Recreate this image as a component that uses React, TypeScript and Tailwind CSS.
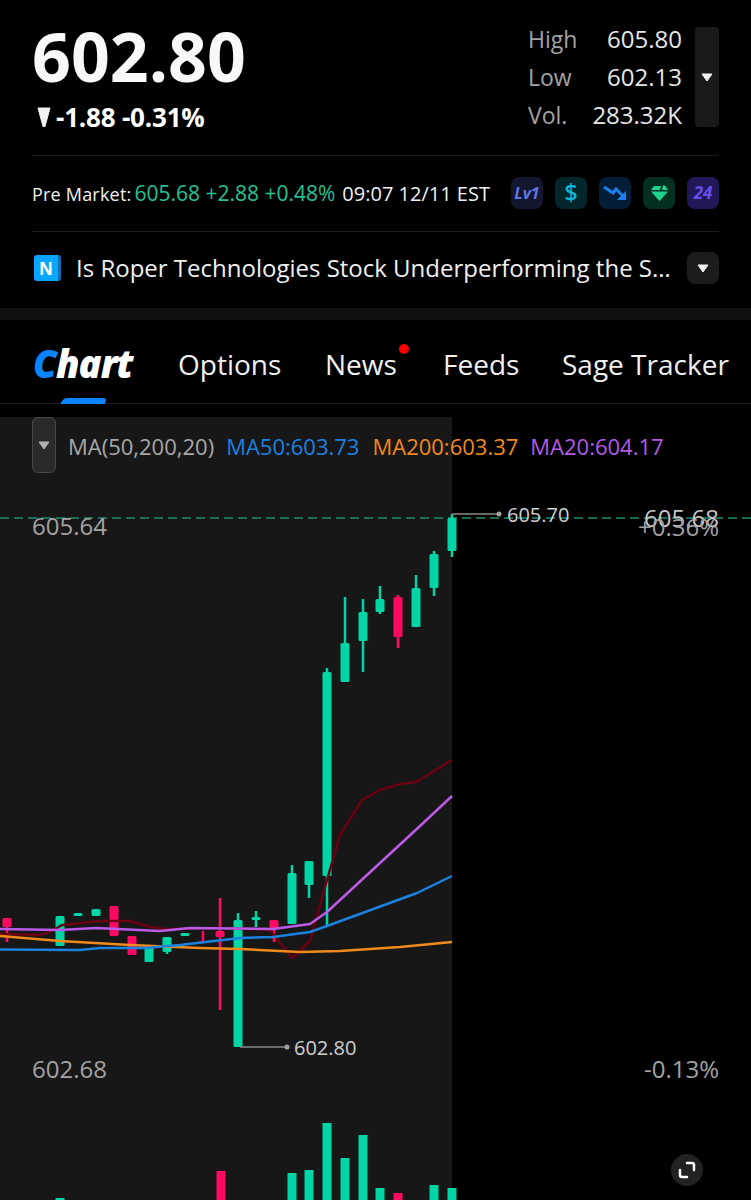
import React from "react";

const GREEN = "#00d6a5";
const RED = "#ff0a62";

// x, bodyTop, bodyBottom, wickTop, wickBottom, up (page coordinates)
const candles: [number, number, number, number, number, boolean][] = [
    [7, 918, 927, 918, 942, false],
    [60, 916, 946, 916, 946, true],
    [78, 913, 916, 913, 916, true],
    [96, 909, 916, 909, 916, true],
    [114, 906, 936, 906, 936, false],
    [132, 936, 955, 936, 955, false],
    [149, 947, 962, 947, 962, true],
    [167, 937, 952, 937, 954, true],
    [185, 933, 936, 933, 936, true],
    [203, 941, 943, 931, 943, false],
    [220, 931, 937, 898, 1010, false],
    [238, 920, 1047, 913, 1047, true],
    [256, 917, 920, 911, 927, true],
    [274, 920, 928, 920, 942, false],
    [292, 873, 924, 865, 924, true],
    [309, 861, 885, 861, 898, true],
    [327, 672, 876, 668, 925, true],
    [345, 643, 682, 597, 682, true],
    [363, 612, 641, 599, 672, true],
    [380, 599, 612, 586, 614, true],
    [398, 597, 637, 595, 648, false],
    [416, 588, 627, 575, 627, true],
    [434, 554, 588, 551, 596, true],
    [452, 518, 551, 514, 557, true],
];

// x, top
const volumes: [number, number, boolean][] = [
    [60, 1198, true],
    [221, 1171, false],
    [292, 1173, true],
    [309, 1170, true],
    [327, 1123, true],
    [345, 1158, true],
    [363, 1135, true],
    [380, 1188, true],
    [398, 1193, false],
    [434, 1185, true],
    [452, 1188, true],
];

const darkRedLine = "0,934 40,935 50,932 62,925 100,921 130,921 150,927 165,929 220,928 270,930 292,958 310,941 327,880 340,835 362,800 380,790 400,784 416,782 452,760";
const orangeLine = "0,936 60,941 130,945 200,948 240,949 300,952 340,951 400,947 452,942";
const blueLine = "0,949.5 80,950 100,948 145,948 180,945 240,938 273,937 310,932 327,926 417,893 452,876";
const purpleLine = "0,929 60,930 96,928 160,931 190,928 273,929 310,924 327,912 420,826 452,796";

function Caret({ className = "" }: { className?: string }) {
    return (
        <svg width="12" height="9" viewBox="0 0 12 9" className={className}>
            <path d="M1 1h10L6 8z" fill="currentColor" stroke="currentColor" strokeLinejoin="round" />
        </svg>
    );
}

function Badge({ bg, children }: { bg: string; children: React.ReactNode }) {
    return (
        <div className={`flex h-[32px] w-[32px] items-center justify-center rounded-lg ${bg}`}>
            {children}
        </div>
    );
}

function Stat({ label, value }: { label: string; value: string }) {
    return (
        <div className="flex h-[38px] w-[154px] items-center justify-between">
            <span className="text-[23px] text-[#a3a3a3]">{label}</span>
            <span className="text-[24px] text-[#e6e6e6]">{value}</span>
        </div>
    );
}

function Chart() {
    return (
        <svg className="absolute inset-0" width="751" height="783" viewBox="0 417 751 783">
            <line x1="0" y1="518" x2="751" y2="518" stroke="#1f8f72" strokeWidth="1.5" strokeDasharray="9 5" />

            {candles.map(([x, top, bottom, wickTop, wickBottom, up]) => (
                <g key={x} fill={up ? GREEN : RED}>
                    <rect x={x - 1.25} y={wickTop} width="2.5" height={wickBottom - wickTop} />
                    <rect x={x - 4.5} y={top} width="9" height={bottom - top} rx="1.5" />
                </g>
            ))}

            {volumes.map(([x, top, up]) => (
                <rect key={x} x={x - 4.5} y={top} width="9" height={1200 - top} fill={up ? GREEN : RED} />
            ))}

            <g fill="none" strokeWidth="2.5" strokeLinejoin="round">
                <polyline points={darkRedLine} stroke="#6b0012" />
                <polyline points={orangeLine} stroke="#f08a1d" />
                <polyline points={blueLine} stroke="#1b82e0" />
                <polyline points={purpleLine} stroke="#bb5ce8" />
            </g>

            {/* high / low callouts */}
            <g stroke="#8a8a8a" strokeWidth="1.5">
                <line x1="452" y1="514" x2="498" y2="514" />
                <line x1="240" y1="1047" x2="286" y2="1047" />
            </g>
            <circle cx="499" cy="514" r="2.5" fill="#a0a0a0" />
            <circle cx="287" cy="1047" r="2.5" fill="#a0a0a0" />
        </svg>
    );
}

export default function App() {
    return (
        <div className="h-[1200px] w-[751px] overflow-hidden bg-black font-['Open_Sans',sans-serif] text-white">
            {/* Quote header */}
            <div className="px-[32px]">
                <div className="flex h-[156px] justify-between border-b border-[#1c1c1c]">
                    <div>
                        <div className="mt-[13px] h-[86px] text-[68px] font-bold leading-[86px] text-[#f8f8f8]">602.80</div>
                        <div className="mt-[1px] flex items-center gap-[5px] pl-[5px] text-[26px] font-bold leading-[34px] tracking-[-0.2px]">
                            <svg width="14" height="21" viewBox="0 0 14 21">
                                <path d="M1 1h12L8 19.5H6z" fill="#f2f2f2" stroke="#f2f2f2" strokeLinejoin="round" />
                            </svg>
                            <span>-1.88 -0.31%</span>
                        </div>
                    </div>
                    <div className="mt-[27px] flex items-start gap-[13px]">
                        <div className="-mt-[7px]">
                            <Stat label="High" value="605.80" />
                            <Stat label="Low" value="602.13" />
                            <Stat label="Vol." value="283.32K" />
                        </div>
                        <div className="flex h-[100px] w-[24px] items-center justify-center rounded bg-[#1a1a1a] text-[#f2f2f2]">
                            <Caret />
                        </div>
                    </div>
                </div>

                {/* Pre market */}
                <div className="flex h-[76px] items-center justify-between border-b border-[#1c1c1c]">
                    <div className="flex items-baseline whitespace-nowrap">
                        <span className="mr-[3px] text-[18px] tracking-[0.2px] text-[#f0f0f0]">Pre Market:</span>
                        <span className="text-[21px] text-[#25c193]">605.68 +2.88 +0.48%</span>
                        <span className="ml-[7px] text-[20px] text-[#f0f0f0]">09:07 12/11 EST</span>
                    </div>
                    <div className="flex gap-[12px] pb-[2px]">
                        <Badge bg="bg-[#12162f]">
                            <span className="text-[16px] font-bold italic text-[#5f78e0]">Lv1</span>
                        </Badge>
                        <Badge bg="bg-[#03262a]">
                            <span className="text-[23px] font-semibold text-[#10b4d8]">$</span>
                        </Badge>
                        <Badge bg="bg-[#031e36]">
                            <svg width="24" height="16" viewBox="0 0 24 16" fill="none">
                                <path d="M1 2l9 6 3-4 7 7" stroke="#1a82f0" strokeWidth="3" />
                                <path d="M23 15H14L23 6z" fill="#1a82f0" />
                            </svg>
                        </Badge>
                        <Badge bg="bg-[#043022]">
                            <svg width="17" height="16" viewBox="0 0 17 16">
                                <path d="M0 6.500h17L8.500 16z" fill="#1fd38f" />
                                <path d="M3 1h7l-1 4H0zM12 0.500l2 0 3 4.500h-6z" fill="#1fd38f" />
                            </svg>
                        </Badge>
                        <Badge bg="bg-[#211858]">
                            <span className="text-[17px] font-bold italic text-[#6a4df0]">24</span>
                        </Badge>
                    </div>
                </div>

                {/* News ticker */}
                <div className="flex h-[76px] items-center pb-[4px]">
                    <div className="ml-[2px] flex h-[26px] w-[27px] items-center justify-center rounded-[3px] border-r-[3px] border-[#0a6fb0] bg-[#0aa5ff] text-[17px] font-bold leading-none">
                        N
                    </div>
                    <div className="ml-[15px] w-[598px] truncate text-[24px] text-[#efefef]">
                        Is Roper Technologies Stock Underperforming the S&amp;P 500?
                    </div>
                    <div className="ml-[13px] flex h-[32px] w-[32px] items-center justify-center rounded-lg bg-[#1c1c1c] text-[#f2f2f2]">
                        <Caret />
                    </div>
                </div>
            </div>

            <div className="h-[12px] bg-[#111111]" />

            {/* Tabs */}
            <div className="relative flex h-[84px] items-center border-b border-[#1e1e1e] pl-[33px] pt-[4px] text-[28px] text-[#f0f0f0]">
                <div className="w-[145px] text-[38px] font-extrabold italic tracking-[-1px] text-white">
                    <span className="text-[#0a84ff]">C</span>hart
                </div>
                <div className="w-[147px]">Options</div>
                <div className="relative w-[118px]">
                    News
                    <span className="absolute left-[74px] top-[1px] h-[10px] w-[10px] rounded-full bg-[#ff0000]" />
                </div>
                <div className="w-[119px]">Feeds</div>
                <div className="whitespace-nowrap">Sage Tracker</div>
                <span className="absolute bottom-[-1px] left-[62px] h-[6px] w-[44px] -skew-x-[25deg] rounded-t-sm bg-[#0a84ff]" />
            </div>

            {/* Chart area */}
            <div className="pt-[13px]">
                <div className="relative h-[783px] bg-black">
                    <div className="absolute inset-y-0 left-0 w-[452px] bg-[#171717]" />
                    <Chart />

                    <div className="relative flex items-center pl-[32px] text-[22px]">
                        <div className="flex h-[56px] w-[24px] items-center justify-center rounded-md border border-[#484848] bg-[#2a2a2a] text-[#b0b0b0]">
                            <Caret />
                        </div>
                        <span className="ml-[12px] pt-[3px] text-[#a8a8a8]">MA(50,200,20)</span>
                        <span className="ml-[12px] pt-[3px] text-[#1b82e0]">MA50:603.73</span>
                        <span className="ml-[13px] pt-[3px] text-[#f08a1d]">MA200:603.37</span>
                        <span className="ml-[12px] pt-[3px] text-[#b45ae6]">MA20:604.17</span>
                    </div>

                    {/* axis labels */}
                    <span className="absolute left-[32px] top-[91px] text-[24px] text-[#a3a3a3]">605.64</span>
                    <span className="absolute right-[32px] top-[83px] text-[24px] text-[#c8c8c8]">605.68</span>
                    <span className="absolute right-[32px] top-[92px] text-[24px] text-[#a3a3a3]">+0.36%</span>
                    <span className="absolute left-[32px] top-[634px] text-[24px] text-[#a3a3a3]">602.68</span>
                    <span className="absolute right-[32px] top-[634px] text-[24px] text-[#a3a3a3]">-0.13%</span>
                    <span className="absolute left-[507px] top-[83px] text-[20px] text-[#d0d0d0]">605.70</span>
                    <span className="absolute left-[294px] top-[616px] text-[20px] text-[#d0d0d0]">602.80</span>

                    <button className="absolute left-[671px] top-[737px] flex h-[32px] w-[32px] items-center justify-center rounded-full bg-[#222222]">
                        <svg width="18" height="18" viewBox="0 0 18 18" fill="none" stroke="#ffffff" strokeWidth="2.500" strokeLinecap="round" strokeLinejoin="round">
                            <path d="M9 2h5a2 2 0 0 1 2 2v5" />
                            <path d="M9 16H4a2 2 0 0 1-2-2V9" />
                        </svg>
                    </button>
                </div>
            </div>
        </div>
    );
}
